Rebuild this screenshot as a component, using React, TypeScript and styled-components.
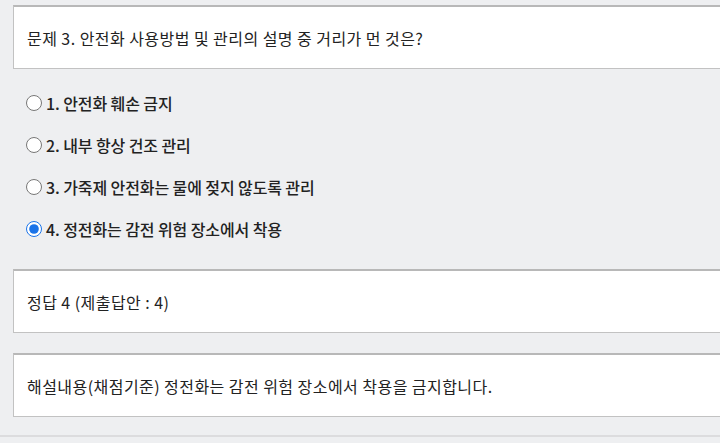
import styled, { createGlobalStyle } from "styled-components";

const GlobalStyle = createGlobalStyle`
  html, body {
    margin: 0;
    padding: 0;
    background: #eeeff1;
    overflow: hidden;
  }
  body {
    font-family: "Noto Sans CJK KR", "Noto Sans", sans-serif;
    color: #222;
  }
`;

const Page = styled.div`
  width: 720px;
  height: 443px;
  overflow: hidden;
`;

const Content = styled.div`
  display: flex;
  flex-direction: column;
  padding: 5px 0 18px 13px;
  border-bottom: 2px solid #dcdcde;
`;

const Box = styled.div<{ $gap?: number }>`
  display: flex;
  align-items: center;
  height: 64px;
  box-sizing: border-box;
  margin-right: -12px;
  margin-top: ${(p) => p.$gap ?? 0}px;
  padding: 0 13px;
  background: #fff;
  border: 1px solid #c2c2c2;
  border-top: 2px solid #b8b8b8;
  font-size: 16px;
  letter-spacing: 0.45px;
`;

const Options = styled.ul`
  list-style: none;
  margin: 0;
  padding: 13px 0 0 13px;
`;

const Option = styled.li`
  display: flex;
  align-items: center;
  height: 42px;
  font-size: 16px;
  font-weight: 500;
  letter-spacing: -0.1px;
`;

const Radio = styled.input`
  width: 16px;
  height: 16px;
  margin: 0 4px 0 0;
  accent-color: #1a73e8;
`;

const options = [
  "1. 안전화 훼손 금지",
  "2. 내부 항상 건조 관리",
  "3. 가죽제 안전화는 물에 젖지 않도록 관리",
  "4. 정전화는 감전 위험 장소에서 착용",
];

export default function App() {
  return (
    <Page>
      <GlobalStyle />
      <Content>
        <Box>문제 3. 안전화 사용방법 및 관리의 설명 중 거리가 먼 것은?</Box>
        <Options>
          {options.map((text, i) => (
            <Option key={text}>
              <Radio type="radio" name="q3" defaultChecked={i === 3} />
              {text}
            </Option>
          ))}
        </Options>
        <Box $gap={19}>정답 4 (제출답안 : 4)</Box>
        <Box $gap={20}>해설내용(채점기준) 정전화는 감전 위험 장소에서 착용을 금지합니다.</Box>
      </Content>
    </Page>
  );
}
